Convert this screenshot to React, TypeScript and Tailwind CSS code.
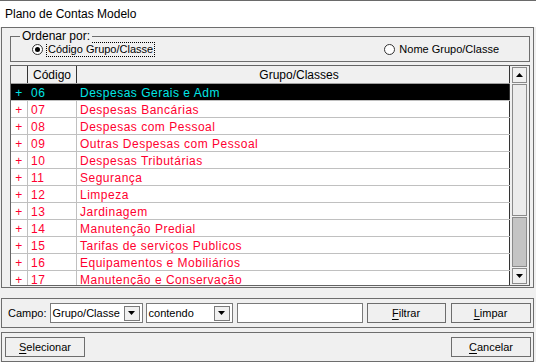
import React from 'react';

const rows = [
  ['06', 'Despesas Gerais e Adm'],
  ['07', 'Despesas Bancárias'],
  ['08', 'Despesas com Pessoal'],
  ['09', 'Outras Despesas com Pessoal'],
  ['10', 'Despesas Tributárias'],
  ['11', 'Segurança'],
  ['12', 'Limpeza'],
  ['13', 'Jardinagem'],
  ['14', 'Manutenção Predial'],
  ['15', 'Tarifas de serviços Publicos'],
  ['16', 'Equipamentos e Mobiliários'],
  ['17', 'Manutenção e Conservação'],
];

function Radio({ checked, label, focus }: { checked?: boolean; label: string; focus?: boolean }) {
  return (
    <div className="flex items-center gap-[4px]">
      <div className="w-[11px] h-[11px] rounded-full border border-[#333] bg-white flex items-center justify-center">
        {checked && <div className="w-[5px] h-[5px] rounded-full bg-black" />}
      </div>
      <span className={focus ? 'px-[1px] leading-[13px] outline-1 outline-dotted outline-black' : 'leading-[13px]'}>{label}</span>
    </div>
  );
}

function Combo({ value, width }: { value: string; width: string }) {
  return (
    <div className={`${width} h-[20px] bg-white border border-[#7a7a7a] flex items-center`}>
      <span className="flex-1 pl-[2px] leading-[14px]">{value}</span>
      <div className="w-[16px] h-[15px] mr-[2px] bg-[#f0f0f0] border border-[#7a7a7a] flex items-center justify-center">
        <svg width="7" height="4" viewBox="0 0 7 4">
          <path d="M0 0h7L3.5 4z" fill="#000" />
        </svg>
      </div>
    </div>
  );
}

function Button({ first, rest, width }: { first: string; rest: string; width: string }) {
  return (
    <div className={`${width} h-[20px] bg-[#f0f0f0] border border-[#6d6d6d] flex items-center justify-center`}>
      <span>
        <span className="underline underline-offset-2">{first}</span>
        {rest}
      </span>
    </div>
  );
}

export default function App() {
  return (
    <div className="w-[536px] h-[362px] bg-[#f0f0f0] text-[11px] text-black overflow-hidden font-['Liberation_Sans',sans-serif]">
      <div className="h-[27px] bg-white border-t border-[#6a6a6a] flex items-center pl-[5px]">
        <span className="text-[12px]">Plano de Contas Modelo</span>
      </div>

      <div className="ml-[1px] w-[533px] h-[261px] border border-[#6d6d6d] pl-[8px] pr-[3px] flex flex-col">
        <div className="relative mt-[8px] h-[26px] border border-[#6d6d6d] flex items-center justify-between pl-[21px] pr-[30px] pt-[1px]">
          <span className="absolute -top-[8px] left-[9px] px-[2px] bg-[#f0f0f0] leading-[14px] text-[12px]">Ordenar por:</span>
          <Radio checked focus label="Código Grupo/Classe" />
          <Radio label="Nome Grupo/Classe" />
        </div>

        <div className="mt-[3px] h-[221px] border border-[#646464] flex bg-white overflow-hidden text-[12px]">
          <div className="flex-1 flex flex-col overflow-hidden">
            <div className="h-[18px] shrink-0 flex bg-[#f0f0f0] border-b border-[#a0a0a0]">
              <div className="w-[17px] border-r border-[#333]" />
              <div className="w-[49px] border-r border-[#333] flex items-center justify-center">Código</div>
              <div className="flex-1 border-r border-[#333] flex items-center justify-center pl-[12px]">Grupo/Classes</div>
            </div>
            {rows.map(([code, name], i) => {
              const sel = i === 0;
              return (
                <div
                  key={code}
                  className={`h-[17px] shrink-0 flex border-b border-[#c0c0c0] tracking-[0.5px] ${sel ? 'bg-black text-[#00e6e6]' : 'bg-white text-[#ff0030]'}`}
                >
                  <div className={`w-[17px] flex items-center justify-center pt-[1px] border-r ${sel ? 'border-black' : 'border-[#c0c0c0]'}`}>+</div>
                  <div className={`w-[49px] flex items-center pl-[3px] pt-[1px] border-r ${sel ? 'border-black' : 'border-[#c0c0c0]'}`}>{code}</div>
                  <div className="flex-1 flex items-center pl-[3px] pt-[1px] border-r border-[#333]">{name}</div>
                </div>
              );
            })}
          </div>

          <div className="w-[19px] bg-[#f0f0f0] flex flex-col px-[2px] py-[1px] gap-[1px]">
            <div className="h-[16px] shrink-0 bg-[#f0f0f0] border border-[#8a8a8a] flex items-center justify-center">
              <svg width="7" height="4" viewBox="0 0 7 4">
                <path d="M0 4h7L3.5 0z" fill="#000" />
              </svg>
            </div>
            <div className="flex-1 bg-[#ececec] border border-[#8a8a8a]" />
            <div className="h-[50px] shrink-0 bg-[#c4c4c4] border border-[#8a8a8a]" />
            <div className="h-[16px] shrink-0 bg-[#f0f0f0] border border-[#8a8a8a] flex items-center justify-center">
              <svg width="7" height="4" viewBox="0 0 7 4">
                <path d="M0 0h7L3.5 4z" fill="#000" />
              </svg>
            </div>
          </div>
        </div>
      </div>

      <div className="mt-[10px] ml-[1px] w-[533px] h-[30px] border border-[#6d6d6d] flex items-center pl-[6px]">
        <span className="mr-[3px]">Campo:</span>
        <Combo value="Grupo/Classe" width="w-[93px]" />
        <div className="w-[3px]" />
        <Combo value="contendo" width="w-[87px]" />
        <div className="w-[4px]" />
        <div className="w-[126px] h-[20px] bg-white border border-[#7a7a7a]" />
        <div className="w-[4px]" />
        <Button first="F" rest="iltrar" width="w-[79px]" />
        <div className="w-[5px]" />
        <Button first="L" rest="impar" width="w-[80px]" />
      </div>

      <div className="mt-[4px] ml-[1px] w-[533px] h-[30px] border border-[#6d6d6d] flex items-center justify-between pl-[3px] pr-[2px]">
        <Button first="S" rest="elecionar" width="w-[80px]" />
        <Button first="C" rest="ancelar" width="w-[80px]" />
      </div>
    </div>
  );
}
